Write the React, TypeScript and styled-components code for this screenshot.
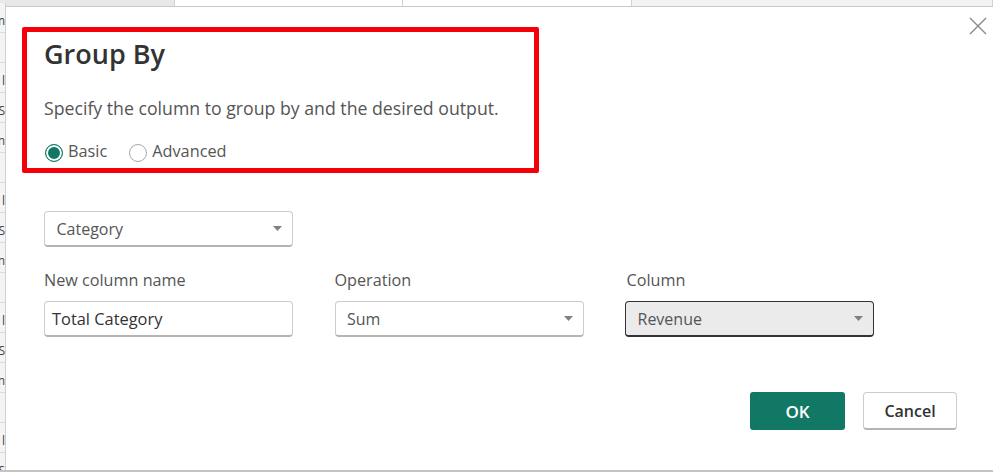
import styled, { createGlobalStyle } from "styled-components";

const GlobalStyle = createGlobalStyle`
  html, body {
    margin: 0;
    padding: 0;
    background: #fff;
  }
  * {
    box-sizing: border-box;
  }
`;

const sideLetters = ["m", "", "l", "S", "n", "", "l", "S", "n", "", "l", "S", "n", "", "l", "S"];

const Caret = () => (
  <svg width="9" height="5" viewBox="0 0 9 5">
    <path d="M0 0h9L4.5 5z" fill="currentColor" />
  </svg>
);

type SelectProps = {
  value: string;
  active?: boolean;
};

const Select = ({ value, active }: SelectProps) => (
  <SelectBox $active={active}>
    <SelectValue>{value}</SelectValue>
    <Caret />
  </SelectBox>
);

export default function App() {
  return (
    <>
      <GlobalStyle />
      <Page>
        <TopStrip>
          <TopCell $width={175} $bg="#e8e8e8" />
          <TopCell $width={228} $bg="#fff" />
          <TopCell $width={229} $bg="#fff" />
          <TopCell $bg="#f3f2f1" />
        </TopStrip>
        <Middle>
          <SideStrip>
            {sideLetters.map((letter, i) => (
              <SideRow key={i}>{letter}</SideRow>
            ))}
          </SideStrip>
          <Dialog>
            <CloseButton aria-label="Close">
              <svg width="18" height="18" viewBox="0 0 18 18">
                <path d="M1 1l16 16M17 1L1 17" stroke="#8a8a8a" strokeWidth="1.4" fill="none" />
              </svg>
            </CloseButton>
            <Highlight>
              <Title>Group By</Title>
              <Description>Specify the column to group by and the desired output.</Description>
              <RadioRow>
                <RadioLabel>
                  <RadioDot $checked />
                  Basic
                </RadioLabel>
                <RadioLabel>
                  <RadioDot />
                  Advanced
                </RadioLabel>
              </RadioRow>
            </Highlight>
            <Form>
              <FieldBox>
                <Select value="Category" />
              </FieldBox>
              <FieldRow>
                <Field>
                  <FieldLabel>New column name</FieldLabel>
                  <TextBox>Total Category</TextBox>
                </Field>
                <Field>
                  <FieldLabel>Operation</FieldLabel>
                  <Select value="Sum" />
                </Field>
                <Field>
                  <FieldLabel $indent={1.5}>Column</FieldLabel>
                  <Select value="Revenue" active />
                </Field>
              </FieldRow>
            </Form>
            <Footer>
              <OkButton>OK</OkButton>
              <CancelButton>Cancel</CancelButton>
            </Footer>
          </Dialog>
        </Middle>
        <BottomStrip />
      </Page>
    </>
  );
}

const Page = styled.div`
  width: 993px;
  height: 472px;
  display: flex;
  flex-direction: column;
  overflow: hidden;
  font-family: "Open Sans", "Noto Sans", sans-serif;
  background: #fff;
`;

const TopStrip = styled.div`
  height: 7px;
  display: flex;
  flex-shrink: 0;
  border-bottom: 1px solid #c9c9c9;
`;

const TopCell = styled.div<{ $width?: number; $bg: string }>`
  flex: ${(p) => (p.$width ? `0 0 ${p.$width}px` : "1")};
  background: ${(p) => p.$bg};
  border-right: 1px solid #d2d2d2;
`;

const Middle = styled.div`
  flex: 1;
  display: flex;
  min-height: 0;
`;

const SideStrip = styled.div`
  width: 6px;
  flex-shrink: 0;
  overflow: hidden;
  background: #f4f4f4;
  border-right: 1px solid #d0d0d0;
  margin-top: -4px;
`;

const SideRow = styled.div`
  height: 30px;
  width: 5px;
  display: flex;
  justify-content: flex-end;
  align-items: center;
  padding-top: 6px;
  overflow: hidden;
  font-size: 12px;
  color: #444;
  border-bottom: 1px solid #dcdcdc;
`;

const Dialog = styled.div`
  position: relative;
  flex: 1;
  display: flex;
  flex-direction: column;
  padding: 20px 0 0 16px;
  background: #fff;
`;

const CloseButton = styled.button`
  position: absolute;
  top: 10px;
  right: 6px;
  padding: 0;
  display: flex;
  border: 0;
  background: none;
`;

const Highlight = styled.section`
  width: 517px;
  height: 146px;
  flex-shrink: 0;
  padding: 0 0 0 17px;
  border: 5px solid #f50009;
  border-radius: 2px;
  color: #444;
`;

const Title = styled.h1`
  margin: 4px 0 0;
  font-size: 27px;
  line-height: 36px;
  font-weight: 600;
  color: #333;
`;

const Description = styled.p`
  margin: 25px 0 0;
  font-size: 17.7px;
  line-height: 22px;
  color: #555;
`;

const RadioRow = styled.div`
  display: flex;
  gap: 22px;
  margin: 21px 0 0 1px;
`;

const RadioLabel = styled.label`
  display: flex;
  align-items: center;
  gap: 5px;
  font-size: 16.3px;
  line-height: 22px;
  color: #555;
`;

const RadioDot = styled.span<{ $checked?: boolean }>`
  width: 18px;
  height: 18px;
  margin-top: 3px;
  border-radius: 50%;
  border: 1px solid ${(p) => (p.$checked ? "#117865" : "#a8a8a8")};
  background: ${(p) => (p.$checked ? "#117865" : "#fff")};
  box-shadow: ${(p) => (p.$checked ? "inset 0 0 0 2px #fff" : "none")};
`;

const Form = styled.div`
  display: flex;
  flex-direction: column;
  margin: 38px 0 0 22px;
`;

const FieldBox = styled.div`
  width: 249px;
`;

const FieldRow = styled.div`
  display: flex;
  gap: 41.5px;
  margin-top: 22px;
`;

const Field = styled.div`
  width: 249px;
  display: flex;
  flex-direction: column;
  gap: 10px;
`;

const FieldLabel = styled.div<{ $indent?: number }>`
  padding-left: ${(p) => p.$indent ?? 0}px;
  font-size: 16.2px;
  line-height: 22px;
  color: #555;
`;

const SelectBox = styled.div<{ $active?: boolean }>`
  height: 36px;
  display: flex;
  align-items: center;
  justify-content: space-between;
  padding: 0 10px 0 11.5px;
  border-radius: 4px;
  color: #808080;
  border: 1px solid ${(p) => (p.$active ? "#333" : "#ccc")};
  border-bottom: ${(p) => (p.$active ? "2px solid #333" : "2px solid #b4b4b4")};
  background: ${(p) => (p.$active ? "#ebebeb" : "#fff")};
`;

const SelectValue = styled.span`
  font-size: 16px;
  color: #555;
`;

const TextBox = styled.div`
  height: 36px;
  display: flex;
  align-items: center;
  padding: 0 7px;
  border-radius: 4px;
  font-size: 16.4px;
  color: #333;
  border: 1px solid #ccc;
  border-bottom: 2px solid #b4b4b4;
`;

const Footer = styled.div`
  display: flex;
  justify-content: flex-end;
  gap: 18px;
  margin: 55px 36px 0 0;
`;

const OkButton = styled.button`
  width: 95px;
  height: 38px;
  border: 0;
  border-radius: 3px;
  background: #117865;
  color: #fff;
  font: 600 17px "Open Sans", sans-serif;
`;

const CancelButton = styled.button`
  width: 94px;
  height: 38px;
  border: 1px solid #ccc;
  border-bottom: 2px solid #b4b4b4;
  border-radius: 4px;
  background: #fff;
  color: #333;
  font: 600 16px "Open Sans", sans-serif;
`;

const BottomStrip = styled.div`
  height: 2px;
  flex-shrink: 0;
  background: #c4c4c4;
`;
